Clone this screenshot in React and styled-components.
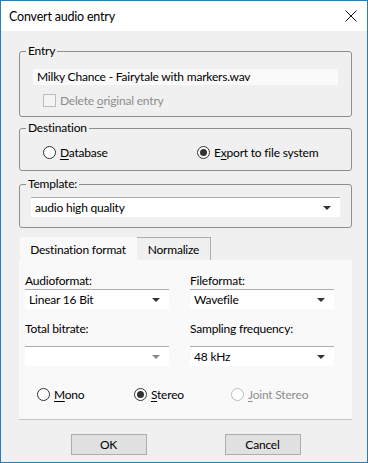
import React from "react";
import styled, { createGlobalStyle } from "styled-components";

const Global = createGlobalStyle`
  html, body {
    margin: 0;
    padding: 0;
    background: #f0f0f0;
  }
  body {
    font-family: Lato, "Open Sans", sans-serif;
    font-size: 12px;
    letter-spacing: -0.2px;
    color: #000;
  }
`;

const Window = styled.div`
  width: 368px;
  height: 463px;
  box-sizing: border-box;
  border: 1px solid #2b7cb1;
  background: #f0f0f0;
  display: flex;
  flex-direction: column;
`;

const TitleBar = styled.div`
  height: 30px;
  background: #fff;
  display: flex;
  align-items: center;
  justify-content: space-between;
  padding: 0 10px 0 8px;
  font-size: 12.5px;
`;

const CloseIcon = () => (
  <svg width="12" height="12" viewBox="0 0 12 12">
    <path d="M0.5 0.5 L11.5 11.5 M11.5 0.5 L0.5 11.5" stroke="#111" strokeWidth="1" />
  </svg>
);

const Content = styled.div`
  flex: 1;
  display: flex;
  flex-direction: column;
  padding: 12px 15px 0 18px;
`;

const Group = styled.fieldset`
  margin: 0 0 ${(p) => p.$after || 0}px 0;
  padding: 0;
  border: 1px solid #8e8e8e;
  border-radius: 3px;
  min-width: 0;
`;

const Legend = styled.legend`
  margin-left: 6px;
  padding: 0 2px;
  line-height: 16px;
`;

const GroupBody = styled.div`
  padding: ${(p) => p.$pad};
  display: flex;
  flex-direction: column;
  gap: ${(p) => p.$gap || 0}px;
`;

const TextField = styled.div`
  height: 16px;
  line-height: 16px;
  background: #fafafa;
  padding: 0 4px;
`;

const Row = styled.div`
  display: flex;
  align-items: center;
  height: 16px;
  padding-left: ${(p) => p.$indent || 0}px;
`;

const Option = styled.label`
  display: flex;
  align-items: center;
  gap: 4px;
  width: ${(p) => (p.$w ? `${p.$w}px` : "auto")};
  color: ${(p) => (p.$disabled ? "#8d8d8d" : "#000")};
`;

const Box = styled.span`
  width: 11px;
  height: 11px;
  border: 1px solid #bcbcbc;
  background: #f4f4f4;
`;

const Circle = styled.span`
  box-sizing: border-box;
  width: 13px;
  height: 13px;
  border-radius: 50%;
  border: 1px solid ${(p) => (p.$disabled ? "#bcbcbc" : "#333")};
  background: #fff;
  display: flex;
  align-items: center;
  justify-content: center;
  &::after {
    content: "";
    width: 7px;
    height: 7px;
    border-radius: 50%;
    background: ${(p) => (p.$checked ? "#333" : "transparent")};
  }
`;

const U = styled.span`
  text-decoration: underline;
  text-underline-offset: 2px;
`;

const Select = styled.div`
  height: 20px;
  box-sizing: border-box;
  border-top: 1px solid #acacac;
  background: #fff;
  display: flex;
  align-items: center;
  justify-content: space-between;
  padding: 0 9px 0 4px;
`;

const Arrow = styled.span`
  width: 0;
  height: 0;
  border-left: 4px solid transparent;
  border-right: 4px solid transparent;
  border-top: 4px solid ${(p) => (p.$dim ? "#888" : "#333")};
`;

const Tabs = styled.div`
  display: flex;
  flex-direction: column;
`;

const TabStrip = styled.div`
  display: flex;
  height: 23px;
`;

const Tab = styled.div`
  box-sizing: border-box;
  width: ${(p) => p.$w}px;
  display: flex;
  align-items: center;
  justify-content: center;
  background: ${(p) => (p.$active ? "#f9f9f9" : "#f0f0f0")};
  border: 1px solid ${(p) => (p.$active ? "#f9f9f9" : "#adadad")};
  border-left: ${(p) => (p.$active ? "1px solid #f0f0f0" : "none")};
  border-bottom: none;
`;

const Panel = styled.div`
  background: #f9f9f9;
  border-bottom: 1px solid #c4c4c4;
  padding: 13px 18px 17px 6px;
  display: flex;
  flex-direction: column;
`;

const FieldGrid = styled.div`
  display: grid;
  grid-template-columns: 144px 144px;
  column-gap: 21px;
  row-gap: 12px;
`;

const Field = styled.div`
  display: flex;
  flex-direction: column;
  gap: ${(p) => p.$gap || 0}px;
`;

const FieldLabel = styled.div`
  line-height: 16px;
`;

const RadioRow = styled(Row)`
  margin-top: 20px;
`;

const Buttons = styled.div`
  display: flex;
  justify-content: center;
  gap: 78px;
  margin-top: 14px;
`;

const Button = styled.button`
  width: 76px;
  height: 21px;
  box-sizing: border-box;
  border: 1px solid #adadad;
  background: #e1e1e1;
  font-family: inherit;
  font-size: 12px;
  letter-spacing: inherit;
  padding: 0;
  color: #000;
`;

export default function App() {
  return (
    <>
      <Global />
      <Window>
        <TitleBar>
          <span>Convert audio entry</span>
          <CloseIcon />
        </TitleBar>
        <Content>
          <Group $after={3}>
            <Legend>Entry</Legend>
            <GroupBody $pad="10px 13px 8px 13px" $gap={7}>
              <TextField>Milky Chance - Fairytale with markers.wav</TextField>
              <Row $indent={10}>
                <Option $disabled>
                  <Box />
                  <span>
                    Delete <U>o</U>riginal entry
                  </span>
                </Option>
              </Row>
            </GroupBody>
          </Group>
          <Group $after={5}>
            <Legend>Destination</Legend>
            <GroupBody $pad="8px 10px 10px 23px">
              <Row>
                <Option $w={154}>
                  <Circle />
                  <span>
                    <U>D</U>atabase
                  </span>
                </Option>
                <Option>
                  <Circle $checked />
                  <span>
                    E<U>x</U>port to file system
                  </span>
                </Option>
              </Row>
            </GroupBody>
          </Group>
          <Group $after={9}>
            <Legend>Template:</Legend>
            <GroupBody $pad="5px 11px 10px 11px">
              <Select>
                <span>audio high quality</span>
                <Arrow />
              </Select>
            </GroupBody>
          </Group>
          <Tabs>
            <TabStrip>
              <Tab $active $w={118}>Destination format</Tab>
              <Tab $w={74}>Normalize</Tab>
            </TabStrip>
            <Panel>
              <FieldGrid>
                <Field>
                  <FieldLabel>Audioformat:</FieldLabel>
                  <Select>
                    <span>Linear 16 Bit</span>
                    <Arrow />
                  </Select>
                </Field>
                <Field>
                  <FieldLabel>Fileformat:</FieldLabel>
                  <Select>
                    <span>Wavefile</span>
                    <Arrow />
                  </Select>
                </Field>
                <Field $gap={9}>
                  <FieldLabel>Total bitrate:</FieldLabel>
                  <Select>
                    <span />
                    <Arrow $dim />
                  </Select>
                </Field>
                <Field $gap={9}>
                  <FieldLabel>Sampling frequency:</FieldLabel>
                  <Select>
                    <span>48 kHz</span>
                    <Arrow />
                  </Select>
                </Field>
              </FieldGrid>
              <RadioRow $indent={12}>
                <Option $w={97}>
                  <Circle />
                  <span>
                    <U>M</U>ono
                  </span>
                </Option>
                <Option $w={97}>
                  <Circle $checked />
                  <span>
                    <U>S</U>tereo
                  </span>
                </Option>
                <Option $disabled>
                  <Circle $disabled />
                  <span>
                    <U>J</U>oint Stereo
                  </span>
                </Option>
              </RadioRow>
            </Panel>
          </Tabs>
          <Buttons>
            <Button>OK</Button>
            <Button>Cancel</Button>
          </Buttons>
        </Content>
      </Window>
    </>
  );
}
